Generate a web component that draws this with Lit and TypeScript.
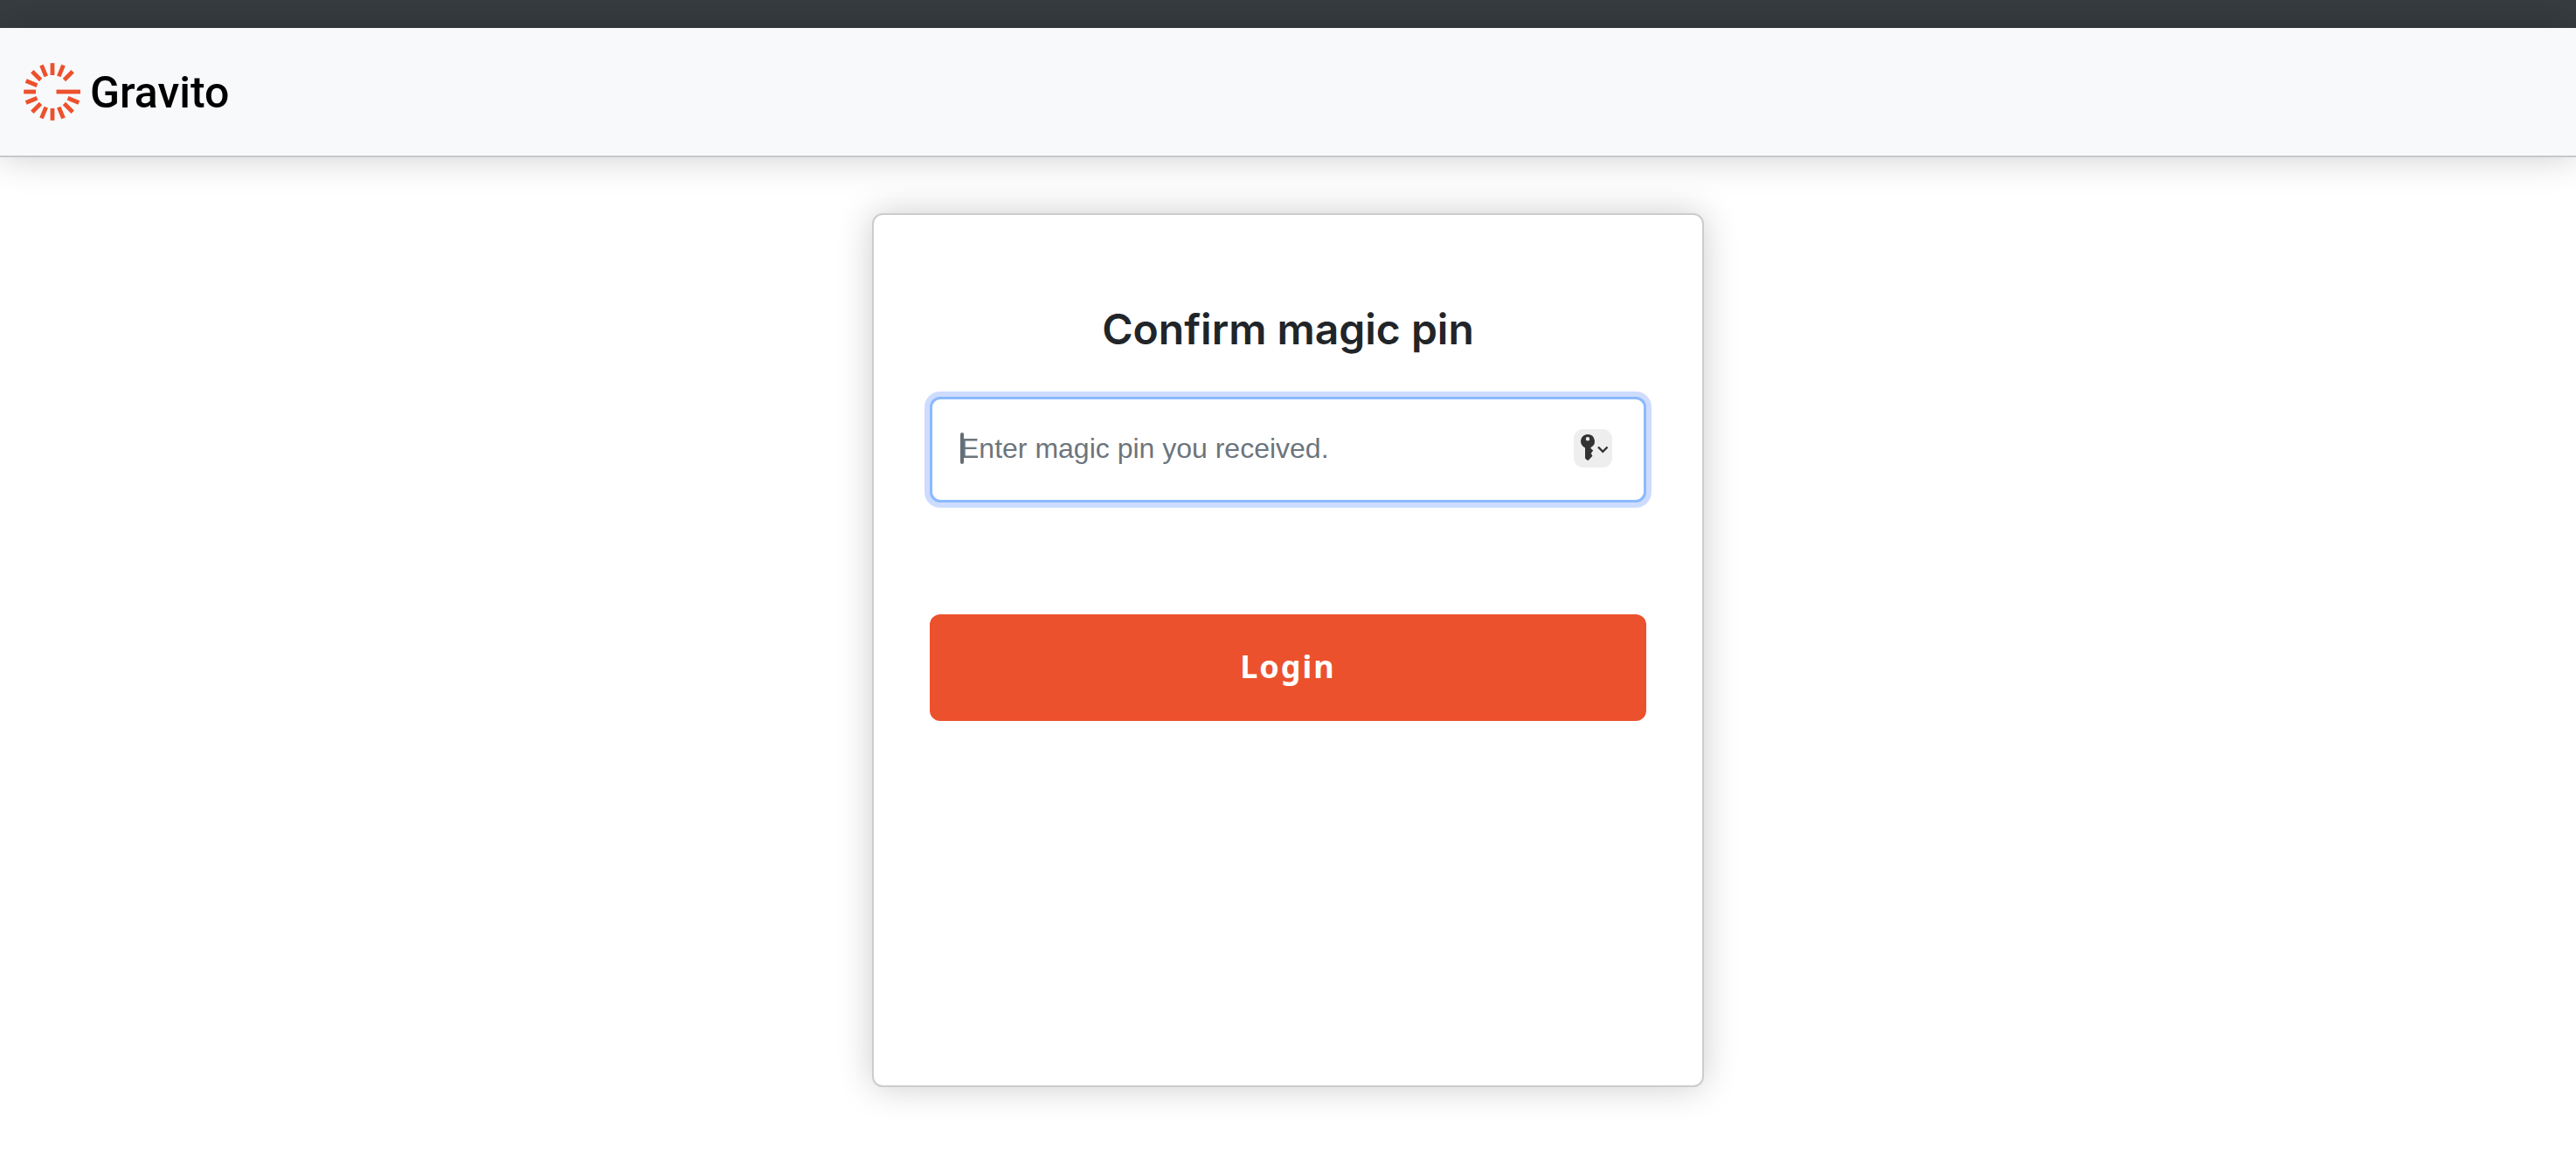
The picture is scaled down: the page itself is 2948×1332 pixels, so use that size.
import { LitElement, html, svg, css } from "lit";
import { customElement } from "lit/decorators.js";

/** Sunburst mark: short rays all round plus the long bar of the "G". */
@customElement("gravito-logo")
class GravitoLogo extends LitElement {
  static styles = css`
    :host {
      display: block;
    }
    .brand {
      display: flex;
      align-items: center;
      gap: 10px;
      color: #000;
      text-decoration: none;
    }
    .mark {
      display: block;
      width: 66px;
      height: 66px;
      fill: #ec512d;
    }
    .name {
      padding-top: 2px;
      font-family: Roboto, "Liberation Sans", sans-serif;
      font-size: 50px;
      font-weight: 500;
      line-height: 56px;
    }
  `;

  render() {
    const rays = Array.from({ length: 16 }, (_, i) => i * 22.5).filter(
      (angle) => angle !== 67.5 && angle !== 90
    );
    return html`
      <a class="brand" href="#" aria-label="Gravito">
        <svg class="mark" viewBox="0 0 66 66" aria-hidden="true">
          ${rays.map(
            (angle) => svg`<rect x="30.6" y="0.2" width="4.8" height="13.8" transform="rotate(${angle} 33 33)" />`
          )}
          <rect x="37.5" y="30.6" width="27.5" height="4.8" />
        </svg>
        <span class="name">Gravito</span>
      </a>
    `;
  }
}

@customElement("pin-form")
class PinForm extends LitElement {
  static styles = css`
    :host {
      display: block;
    }
    .form {
      display: flex;
      flex-direction: column;
    }
    .title {
      margin: 0 0 48px;
      font-family: Inter, "Liberation Sans", sans-serif;
      font-size: 48px;
      font-weight: 600;
      line-height: 58px;
      text-align: center;
      color: #212529;
    }
    .field {
      position: relative;
      margin-bottom: 128px;
    }
    .input {
      display: block;
      box-sizing: border-box;
      width: 100%;
      height: 121px;
      padding: 0 112px 2px 32px;
      border: 3px solid #8bb9fe;
      border-radius: 12px;
      outline: none;
      box-shadow: 0 0 0 6px #cddcff;
      background: #fff;
      color: #212529;
      caret-color: transparent;
      font-family: "Liberation Sans", sans-serif;
      font-size: 32px;
    }
    .input::placeholder {
      color: #6c757d;
      opacity: 1;
    }
    .caret {
      position: absolute;
      left: 35px;
      top: 41px;
      width: 4px;
      height: 36px;
      border-radius: 2px;
      background: #656d75;
    }
    .keys {
      position: absolute;
      right: 39px;
      top: 37px;
      width: 44px;
      height: 44px;
      padding: 0;
      border: 0;
      border-radius: 11px;
      background: #eee;
    }
    .keys svg {
      display: block;
    }
    .submit {
      height: 122px;
      padding: 0 0 4px;
      border: 0;
      border-radius: 12px;
      background: #ec512d;
      color: #fff;
      font-family: "Noto Sans", "Liberation Sans", sans-serif;
      font-size: 36px;
      font-weight: 700;
      letter-spacing: 2px;
    }
  `;

  render() {
    return html`
      <form class="form" @submit=${(e: Event) => e.preventDefault()}>
        <h1 class="title"><label for="pin">Confirm magic pin</label></h1>
        <div class="field">
          <input class="input" id="pin" type="text" placeholder="Enter magic pin you received." />
          <span class="caret"></span>
          <button class="keys" type="button" aria-label="Saved passwords">
            <svg width="44" height="44" viewBox="0 0 44 44" aria-hidden="true">
              <path
                fill="#333"
                fill-rule="evenodd"
                d="M16 6a8 8 0 0 1 3.400 15.200v.8l2.800 2.600-2.400 3.200 1.600 3-4.600 5h-1.200L13 33.400V21.400A8 8 0 0 1 16 6Zm0 3a2.200 2.200 0 1 0 0 4.400a2.200 2.200 0 0 0 0-4.400Z"
              />
              <path fill="none" stroke="#333" stroke-width="2.400" d="M28 20.500l5.300 5.300 5.300-5.300" />
            </svg>
          </button>
        </div>
        <button class="submit" type="submit">Login</button>
      </form>
    `;
  }
}

@customElement("app-root")
class AppRoot extends LitElement {
  static styles = css`
    :host {
      display: block;
      min-height: 100vh;
      background: #fff;
      font-family: "Liberation Sans", sans-serif;
    }
    .strip {
      height: 32px;
      background: #363c40;
    }
    .navbar {
      display: flex;
      align-items: center;
      height: 146px;
      padding: 0 27px;
      border-bottom: 2px solid #c6c8ca;
      background: #f8f9fb;
      box-shadow: 0 0 40px rgba(0, 0, 0, 0.2);
    }
    .main {
      display: flex;
      justify-content: center;
      padding: 64px 32px 88px;
    }
    .card {
      box-sizing: border-box;
      width: 100%;
      max-width: 952px;
      min-height: 1000px;
      padding: 102px 64px 64px;
      border: 2px solid #ccc;
      border-radius: 12px;
      background: #fff;
      box-shadow: 0 0 40px rgba(0, 0, 0, 0.2);
    }
  `;

  render() {
    return html`
      <div class="strip"></div>
      <header class="navbar"><gravito-logo></gravito-logo></header>
      <main class="main">
        <section class="card"><pin-form></pin-form></section>
      </main>
    `;
  }
}
